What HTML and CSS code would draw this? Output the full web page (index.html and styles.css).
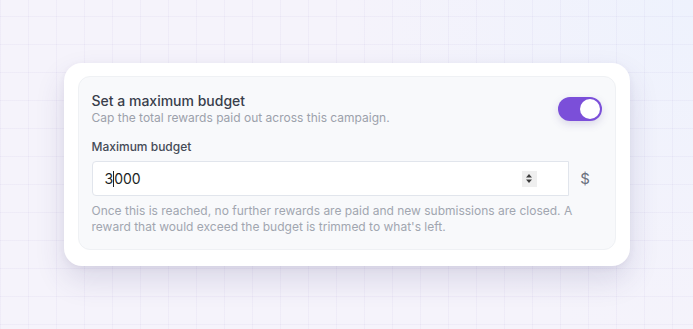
FILE: index.html
```html
<!DOCTYPE html>
<html lang="en">
<head>
    <meta charset="UTF-8">
    <meta name="viewport" content="width=device-width, initial-scale=1.0">
    <title>Budget cap</title>
    <link rel="stylesheet" href="styles.css">
</head>
<body>
    <div class="card">
        <div class="panel">
            <div class="panel-head">
                <div>
                    <div class="panel-title">Set a maximum budget</div>
                    <div class="panel-sub">Cap the total rewards paid out across this campaign.</div>
                </div>
                <span class="toggle is-on"><span class="knob"></span></span>
            </div>

            <label class="field-label" for="maxBudget">Maximum budget</label>
            <div class="field-row">
                <div class="field-input">
                    <span class="value">3<span class="caret"></span>000</span>
                    <span class="spinner">
                        <svg width="8" height="11" viewBox="0 0 8 11"><path d="M4 1 L7 4.5 H1 Z M4 10 L7 6.5 H1 Z" fill="#3d3d3d"/></svg>
                    </span>
                </div>
                <span class="field-addon">$</span>
            </div>
            <p class="field-help">Once this is reached, no further rewards are paid and new submissions are closed. A reward that would exceed the budget is trimmed to what's left.</p>
        </div>
    </div>
</body>
</html>
```

FILE: styles.css
```css
html, body {
    height: 100%;
}

body {
    margin: 0;
    font-family: 'Inter', sans-serif;
    display: flex;
    align-items: center;
    justify-content: center;
    background-color: #f5f3fb;
    background-image:
        linear-gradient(rgba(110, 90, 190, 0.05) 1px, transparent 1px),
        linear-gradient(90deg, rgba(110, 90, 190, 0.05) 1px, transparent 1px),
        radial-gradient(circle at 100% 0%, #eef2fd 0%, rgba(238, 242, 253, 0) 45%);
    background-size: 28px 28px, 28px 28px, 100% 100%;
    background-position: 0 16px, 28px 0, 0 0;
}

.card {
    width: 538px;
    padding: 13px 14px 16px;
    background: #fff;
    border-radius: 18px;
    box-shadow: 0 14px 30px rgba(60, 50, 110, 0.14), 0 2px 6px rgba(60, 50, 110, 0.06);
}

.panel {
    padding: 15px 13px 15px;
    background: #f8f9fb;
    border: 1px solid #eff1f4;
    border-radius: 12px;
}

.panel-head {
    display: flex;
    align-items: center;
    justify-content: space-between;
}

.panel-title {
    font-size: 14px;
    font-weight: 500;
    line-height: 18px;
    color: #383e4b;
}

.panel-sub {
    font-size: 12px;
    line-height: 16px;
    color: #9ca1ab;
}

.toggle {
    position: relative;
    width: 44px;
    height: 24px;
    border-radius: 12px;
    background: #7b4fd9;
    box-shadow: 0 3px 8px rgba(80, 60, 150, 0.18);
}

.toggle .knob {
    position: absolute;
    top: 2px;
    right: 2px;
    width: 20px;
    height: 20px;
    border-radius: 50%;
    background: #fff;
}

.field-label {
    display: block;
    margin-top: 13px;
    font-size: 12px;
    font-weight: 500;
    line-height: 16px;
    color: #454b57;
}

.field-row {
    display: flex;
    margin-top: 6px;
}

.field-input {
    flex: 1;
    height: 33px;
    display: flex;
    align-items: center;
    justify-content: space-between;
    padding: 0 31px 0 12px;
    background: #fff;
    border: 1px solid #e1e5ec;
    border-radius: 4px 0 0 4px;
}

.value {
    font-size: 14px;
    color: #1c1f25;
}

.caret {
    display: inline-block;
    width: 1px;
    height: 16px;
    margin: 0 0 -3px;
    background: #1c1f25;
}

.spinner {
    width: 15px;
    height: 16px;
    display: flex;
    align-items: center;
    justify-content: center;
    background: #efefef;
}

.field-addon {
    width: 33px;
    display: flex;
    align-items: center;
    justify-content: center;
    font-size: 15px;
    color: #6b7280;
    border-radius: 0 10px 10px 0;
}

.field-help {
    margin: 7px 0 0;
    font-size: 12px;
    line-height: 15.5px;
    color: #a1a6b0;
}
```
